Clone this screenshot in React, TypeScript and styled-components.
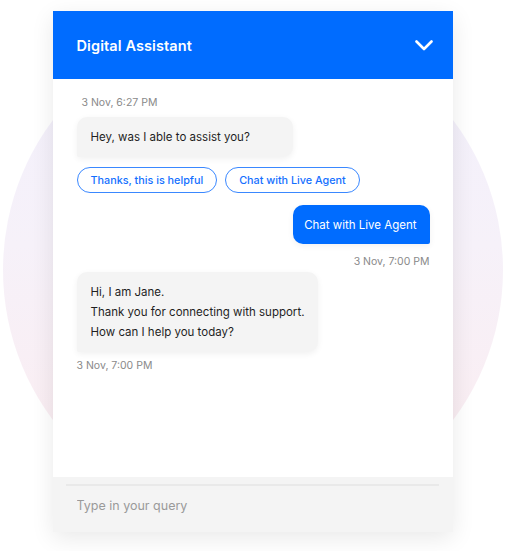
import React from 'react';
import styled, { createGlobalStyle } from 'styled-components';

const GlobalStyle = createGlobalStyle`
  html, body {
    margin: 0;
    padding: 0;
    background: #ffffff;
  }
  body {
    font-family: Inter, "Open Sans", "DejaVu Sans", sans-serif;
    -webkit-font-smoothing: antialiased;
  }
`;

const Stage = styled.div`
  position: relative;
  width: 505px;
  height: 551px;
  overflow: hidden;
  display: flex;
  justify-content: center;
  padding-top: 11px;
  box-sizing: border-box;

  &::before {
    content: '';
    position: absolute;
    left: 3px;
    top: 20px;
    width: 500px;
    height: 500px;
    border-radius: 50%;
    background: linear-gradient(180deg, #f2f0fc 0%, #f6f1f9 45%, #fcecef 100%);
    z-index: 0;
  }
`;

const Widget = styled.div`
  position: relative;
  z-index: 1;
  width: 400px;
  height: 521px;
  display: flex;
  flex-direction: column;
  background: #ffffff;
  box-shadow: 0 6px 22px rgba(0, 0, 0, 0.09);
`;

const Header = styled.div`
  height: 68px;
  flex-shrink: 0;
  background: #006cff;
  display: flex;
  align-items: center;
  justify-content: space-between;
  padding: 0 20px 0 24px;
  box-sizing: border-box;
`;

const Title = styled.h1`
  margin: 0;
  color: #ffffff;
  font-size: 14.5px;
  font-weight: 600;
  letter-spacing: 0.1px;
`;

const Toggle = styled.button`
  border: 0;
  background: none;
  padding: 0;
  display: flex;
  cursor: pointer;
`;

const Thread = styled.div`
  flex: 1;
  display: flex;
  flex-direction: column;
  padding: 17px 23px 0 24px;
`;

const Stamp = styled.div<{ $align?: 'left' | 'right'; $indent?: number; $top?: number }>`
  font-size: 10.5px;
  line-height: 14px;
  color: #8a8a8a;
  text-align: ${(p) => p.$align || 'left'};
  padding-left: ${(p) => p.$indent || 0}px;
  margin-top: ${(p) => p.$top || 0}px;
`;

const Bubble = styled.div<{ $mine?: boolean; $top?: number; $minWidth?: number }>`
  align-self: ${(p) => (p.$mine ? 'flex-end' : 'flex-start')};
  margin-top: ${(p) => p.$top || 0}px;
  min-width: ${(p) => p.$minWidth || 0}px;
  box-sizing: border-box;
  background: ${(p) => (p.$mine ? '#006cff' : '#f4f4f4')};
  color: ${(p) => (p.$mine ? '#ffffff' : '#1f1f1f')};
  border-radius: ${(p) => (p.$mine ? '10px 10px 2px 10px' : '10px 10px 10px 2px')};
  box-shadow: 0 2px 6px rgba(0, 0, 0, 0.06);
  font-size: 11.5px;
  line-height: 20px;
  padding: ${(p) => (p.$mine ? '10px 13px 9px 11px' : '10px 14px')};
`;

const Line = styled.div``;

const Chips = styled.div`
  display: flex;
  gap: 8px;
  margin-top: 10px;
`;

const Chip = styled.button`
  height: 26px;
  box-sizing: border-box;
  padding: 0 13px;
  border: 1px solid #3a88ff;
  border-radius: 13px;
  background: #ffffff;
  color: #1470ff;
  font-family: inherit;
  font-size: 10.8px;
  font-weight: 500;
  cursor: pointer;
`;

const Footer = styled.div`
  height: 55px;
  flex-shrink: 0;
  background: #f4f4f4;
  padding: 7px 14px 0 13px;
  box-sizing: border-box;
`;

const Divider = styled.div`
  height: 2px;
  background: #e9e9e9;
`;

const Query = styled.input`
  display: block;
  width: 100%;
  box-sizing: border-box;
  border: 0;
  outline: none;
  background: transparent;
  margin-top: 9px;
  padding: 0 0 0 11px;
  height: 20px;
  font-family: inherit;
  font-size: 12.5px;
  color: #333;

  &::placeholder {
    color: #9a9a9a;
  }
`;

const Chevron = () => (
  <svg width="18" height="11" viewBox="0 0 18 11" fill="none">
    <path d="M1.5 1.5L9 9L16.5 1.5" stroke="#ffffff" strokeWidth="2.6" strokeLinecap="round" strokeLinejoin="round" />
  </svg>
);

const App = () => {
  return (
    <>
      <GlobalStyle />
      <Stage>
        <Widget>
          <Header>
            <Title>Digital Assistant</Title>
            <Toggle aria-label="Collapse">
              <Chevron />
            </Toggle>
          </Header>

          <Thread>
            <Stamp $indent={5}>3 Nov, 6:27 PM</Stamp>
            <Bubble $top={7} $minWidth={216}>
              <Line>Hey, was I able to assist you?</Line>
            </Bubble>
            <Chips>
              <Chip>Thanks, this is helpful</Chip>
              <Chip>Chat with Live Agent</Chip>
            </Chips>
            <Bubble $mine $top={12}>
              <Line>Chat with Live Agent</Line>
            </Bubble>
            <Stamp $align="right" $top={11}>3 Nov, 7:00 PM</Stamp>
            <Bubble $top={3}>
              <Line>Hi, I am Jane.</Line>
              <Line>Thank you for connecting with support.</Line>
              <Line>How can I help you today?</Line>
            </Bubble>
            <Stamp $top={7}>3 Nov, 7:00 PM</Stamp>
          </Thread>

          <Footer>
            <Divider />
            <Query placeholder="Type in your query" />
          </Footer>
        </Widget>
      </Stage>
    </>
  );
};

export default App;
